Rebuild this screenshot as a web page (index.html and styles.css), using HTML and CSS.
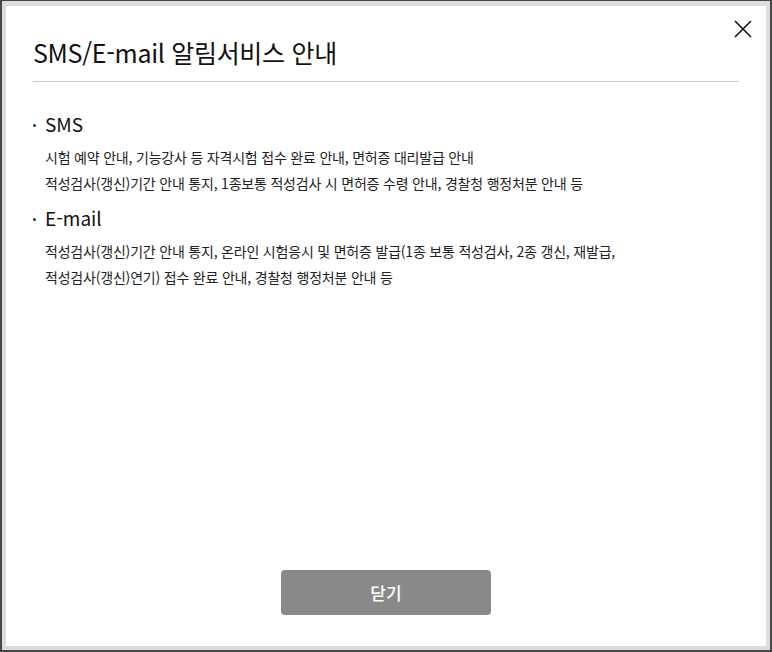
FILE: index.html
```html
<!DOCTYPE html>
<html lang="ko">
<head>
<meta charset="utf-8">
<link rel="stylesheet" href="styles.css">
</head>
<body>
<div class="backdrop">
  <div class="modal">
    <button class="close" aria-label="닫기">
      <svg width="18" height="18" viewBox="0 0 18 18"><path d="M1 1L17 17M17 1L1 17" stroke="#111" stroke-width="1.6" fill="none"/></svg>
    </button>
    <div class="head">
      <h1 class="title">SMS/E-mail 알림서비스 안내</h1>
    </div>
    <div class="body">
      <section class="sec">
        <h2 class="sec-title">SMS</h2>
        <p class="sec-text">시험 예약 안내, 기능강사 등 자격시험 접수 완료 안내, 면허증 대리발급 안내<br>적성검사(갱신)기간 안내 통지, 1종보통 적성검사 시 면허증 수령 안내, 경찰청 행정처분 안내 등</p>
      </section>
      <section class="sec">
        <h2 class="sec-title">E-mail</h2>
        <p class="sec-text">적성검사(갱신)기간 안내 통지, 온라인 시험응시 및 면허증 발급(1종 보통 적성검사, 2종 갱신, 재발급,<br>적성검사(갱신)연기) 접수 완료 안내, 경찰청 행정처분 안내 등</p>
      </section>
    </div>
    <div class="foot">
      <button class="btn-close">닫기</button>
    </div>
  </div>
</div>
</body>
</html>
```
FILE: styles.css
```css
html, body {
  margin: 0;
  padding: 0;
  height: 100%;
}
body {
  background: #474747;
  font-family: "Noto Sans CJK KR", "Noto Sans", sans-serif;
  color: #111;
}
.backdrop {
  box-sizing: border-box;
  height: 652px;
  padding: 1px 2px 2px 2px;
}
.modal {
  position: relative;
  box-sizing: border-box;
  height: 100%;
  background: #fff;
  border: 4px solid #dcdcdc;
  border-top-width: 5px;
  display: flex;
  flex-direction: column;
  padding: 0 27px;
}
.close {
  position: absolute;
  top: 14px;
  right: 14px;
  width: 18px;
  height: 18px;
  padding: 0;
  border: 0;
  background: none;
  display: flex;
}
.head {
  padding-top: 28px;
  padding-bottom: 10px;
  border-bottom: 1px solid #c8c8c8;
}
.title {
  margin: 0;
  font-size: 25px;
  font-weight: 400;
  line-height: 37px;
  letter-spacing: -0.3px;
}
.body {
  flex: 1;
  padding-top: 28px;
}
.sec {
  margin: 0 0 8px;
}
.sec-title {
  margin: 0;
  font-size: 19px;
  font-weight: 400;
  line-height: 28px;
  display: flex;
  align-items: center;
}
.sec-title::before {
  content: "";
  width: 3px;
  height: 3px;
  border-radius: 50%;
  background: #333;
  margin: 2px 9px 0 0;
}
.sec-text {
  margin: 7px 0 0 12px;
  font-size: 14px;
  line-height: 25.5px;
  color: #222;
  letter-spacing: -0.2px;
}
.foot {
  display: flex;
  justify-content: center;
  padding-bottom: 31px;
}
.btn-close {
  width: 210px;
  height: 45px;
  border: 0;
  border-radius: 4px;
  background: #898989;
  color: #fff;
  font-family: "Noto Sans CJK KR", sans-serif;
  font-size: 17px;
  font-weight: 500;
}
```
